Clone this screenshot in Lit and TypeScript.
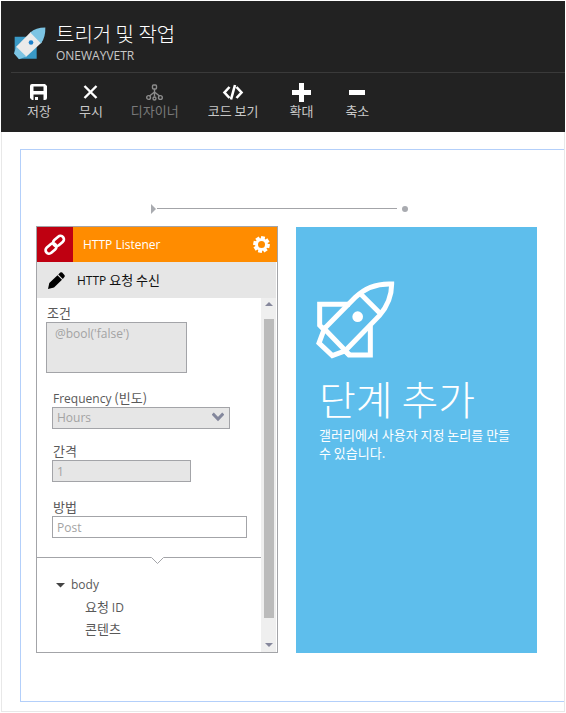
import { LitElement, html, css, svg } from "lit";
import { customElement } from "lit/decorators.js";

const icons = {
  save: svg`<path fill="#fff" fill-rule="evenodd" d="M2 0H15L17 2V14Q17 16 15 16H2L0 14V2Q0 0 2 0ZM3.500 2.500V7H13.500V2.500ZM3.500 10.500V16H5V13H8V16H13.500V10.500Z"/>`,
  discard: svg`<path fill="none" stroke="#fff" stroke-width="2.4" d="M2.5 2L14.500 14M14.500 2L2.500 14"/>`,
  designer: svg`<g fill="none" stroke="#8c8c8c" stroke-width="1.4"><rect x="6.500" y="1" width="4" height="4" rx="1"/><path d="M8.500 5V12.500M8.500 8L3.500 12M8.500 8L13.500 12"/><circle cx="2.600" cy="13.500" r="1.900"/><circle cx="8.500" cy="14.500" r="1.500"/><circle cx="14.400" cy="13.500" r="1.900"/></g>`,
};

@customElement("app-root")
export class AppRoot extends LitElement {
  static styles = css`
    :host {
      display: block;
      font: 13px/18px "Noto Sans CJK KR", "Noto Sans", sans-serif;
      color: #595959;
      background: #fff;
      padding: 1px;
    }
    * { box-sizing: border-box; }
    button, input, select, textarea { font: inherit; color: inherit; border-radius: 0; margin: 0; }
    button { background: none; border: 0; padding: 0; cursor: pointer; }
    svg { display: block; }
    h1, h2, h3, p, ul { margin: 0; padding: 0; font-weight: 400; }
    .latin { font-family: "Open Sans", "Noto Sans CJK KR", sans-serif; font-size: 12px; }
    span.latin { line-height: 12px; }

    .top { background: #222; color: #c8c8c8; padding: 20px 0 0 10px; height: 131px; }
    .brand { display: flex; align-items: flex-end; gap: 10px; padding: 0 0 7px 3px; border-bottom: 1px solid #3a3a3a; }
    .brand svg { margin-bottom: 5px; }
    .brand h1 { font-size: 20px; line-height: 26px; font-weight: 300; color: #fff; }
    .tools { display: flex; padding: 8px 0 0 2px; }
    .tool { display: flex; flex-direction: column; align-items: center; padding: 0 14px; }
    .tool.view { padding: 0 15px; }
    .tool.zoom { padding: 0 16px; }
    .tool svg { margin: 3px 0 1px; height: 17px; }
    .tool:disabled { color: #7a7a7a; }

    .page { border: 1px solid #e8e8e8; border-top: 0; padding: 17px 0 9px 18px; }
    .canvas { border: 1px solid #b3cffa; border-right: 0; padding: 54px 27px 48px 15px; }
    .connector { display: flex; align-items: center; height: 9px; margin: 0 129px 13px 115px; }
    .arrow { border: 5px solid transparent; border-left-color: #a9abb0; border-right: 0; margin-right: 1px; }
    .line { flex: 1; height: 1px; background: #a3a4a8; margin-right: 5px; }
    .dot { width: 6px; height: 6px; border-radius: 50%; background: #a9abb0; }
    .steps { display: grid; grid-template-columns: 1fr 1fr; gap: 18px; }

    .card { border: 1px solid #a3a4a8; }
    .head { display: flex; align-items: center; background: #ff8c00; color: #fff; height: 35px; padding-right: 7px; }
    .link { background: #bf0011; width: 36px; height: 35px; display: grid; place-items: center; margin-right: 10px; }
    .head h2 { flex: 1; }
    .sub h3 { font-size: 13px; }
    .sub { display: flex; align-items: center; gap: 12px; background: #e6e6e6; color: #111; height: 36px; padding-left: 11px; margin-right: 1px; }
    .body { display: flex; }
    .content { flex: 1; min-width: 0; }
    .form { display: flex; flex-direction: column; align-items: flex-start; padding: 6px 14px 19px 15px; border-bottom: 1px solid #a3a4a8; }
    .form label { padding-left: 1px; }
    .form .wide { margin-left: -6px; }
    .field { border: 1px solid #a3a4a8; height: 22px; line-height: 18px; padding: 0 4px; color: #a3a3a3; background: #fff; outline: 0; opacity: 1; }
    .field:disabled { background: #e6e6e6; }
    .cond { width: 141px; height: 51px; margin: 0 0 16px -6px; padding: 2px 8px; resize: none; display: block; }
    .picker { position: relative; width: 178px; margin-bottom: 13px; }
    .picker select { appearance: none; width: 100%; display: block; }
    .picker svg { position: absolute; right: 6px; top: 5px; pointer-events: none; }
    .short { width: 139px; margin-bottom: 16px; }
    .full { width: 195px; max-width: 100%; }
    .tree { position: relative; padding: 16px 0 12px 19px; line-height: 22px; }
    .notch { position: absolute; top: -1px; left: 51%; }
    .tree ul { list-style: none; padding-left: 29px; }
    .node { display: flex; align-items: center; gap: 6px; height: 22px; }
    .scroll { width: 15px; margin-right: 1px; background: #efefef; display: flex; flex-direction: column; align-items: center; padding: 4px 0 5px; }
    .up, .down { border: 4px solid transparent; }
    .up { border-top: 0; border-bottom-color: #86889c; margin-bottom: 13px; }
    .down { border-bottom: 0; border-top-color: #86889c; margin-top: 25px; }
    .thumb { flex: 1; width: 10px; background: #bbb; }

    .add { background: #5ebeec; color: #fff; text-align: left; margin-top: 1px; padding: 54px 16px 0 20px; display: flex; flex-direction: column; justify-content: flex-start; align-items: flex-start; }
    .title { font-size: 40px; line-height: 56px; font-weight: 300; margin: 11px 0 0 3px; }
    .text { margin-left: 3px; }
  `;

  render() {
    return html`
      <header class="top">
        <div class="brand">
          <svg width="32" height="33" viewBox="43 82 96 98">
            <path fill="#3999c6" d="M45 111H111V177H58L45 160Z" />
            <path fill="#eaeaea" d="M94 96L126 128L78 172L48 142Z" />
            <path fill="#7cc4e3" d="M137 83Q138 112 124 131L92 98Q108 83 137 83ZM50 141L43 161L58 178L80 170Z" />
            <circle cx="94" cy="128" r="7" fill="#1b80cc" />
          </svg>
          <div><h1>트리거 및 작업</h1><p class="latin">ONEWAYVETR</p></div>
        </div>
        <nav class="tools">
          <button class="tool"><svg width="17" viewBox="0 0 17 17">${icons.save}</svg>저장</button>
          <button class="tool"><svg width="17" viewBox="0 0 17 17">${icons.discard}</svg>무시</button>
          <button class="tool" disabled><svg width="17" viewBox="0 0 17 17">${icons.designer}</svg>디자이너</button>
          <button class="tool view"><svg width="22" viewBox="0 0 22 17"><path fill="none" stroke="#fff" stroke-width="2.600" d="M7.500 3L2.500 8.500L7.500 14M14.500 3L19.500 8.500L14.500 14M13 1L9 15.500" /></svg>코드 보기</button>
          <button class="tool zoom"><svg width="19" viewBox="0 0 19 17" overflow="visible"><path fill="#fff" d="M7 -1H12V6H19V11H12V18H7V11H0V6H7Z" /></svg>확대</button>
          <button class="tool zoom"><svg width="16" viewBox="0 0 16 17"><path fill="#fff" d="M0 6H16V11H0Z" /></svg>축소</button>
        </nav>
      </header>
      <main class="page">
        <div class="canvas">
          <div class="connector"><span class="arrow"></span><span class="line"></span><span class="dot"></span></div>
          <div class="steps">
            <section class="card">
              <div class="head">
                <span class="link">
                  <svg width="24" height="24" viewBox="0 0 24 24"><g fill="none" stroke="#fff" stroke-width="2.700"><rect x="-6" y="-3.500" width="12" height="7" rx="3.500" transform="translate(15.500 8) rotate(-40)" /><rect x="-6" y="-3.500" width="12" height="7" rx="3.500" transform="translate(8 15.500) rotate(-40)" /></g></svg>
                </span>
                <h2 class="latin">HTTP Listener</h2>
                <button aria-label="설정">
                  <svg width="17" height="17" viewBox="-8.500 -8.500 17 17"><g fill="#fff" transform="rotate(12)"><path d="M-2 -8.300H2V8.300H-2Z" /><path d="M-2 -8.300H2V8.300H-2Z" transform="rotate(45)" /><path d="M-2 -8.300H2V8.300H-2Z" transform="rotate(90)" /><path d="M-2 -8.300H2V8.300H-2Z" transform="rotate(135)" /><circle r="6.300" /></g><circle r="3.500" fill="#ff8c00" /></svg>
                </button>
              </div>
              <div class="sub">
                <svg width="17" height="17" viewBox="0 0 17 17"><path d="M0 17L1.300 11L9.500 3.200L14 7.700L6 15.500ZM10.300 2.400L12.200 .6Q13.200 -.2 14.200 .6L16.400 2.900Q17.200 3.900 16.400 5L14.800 6.900Z" /></svg>
                <h3><span class="latin">HTTP</span> 요청 수신</h3>
              </div>
              <div class="body">
                <div class="content">
                  <div class="form">
                    <label class="wide" for="cond">조건</label>
                    <textarea id="cond" class="field latin cond" disabled .value=${"@bool('false')"}></textarea>
                    <label for="freq"><span class="latin">Frequency</span> (빈도)</label>
                    <div class="picker">
                      <select id="freq" class="field latin" disabled><option>Hours</option></select>
                      <svg width="12" height="10" viewBox="0 0 12 10"><path fill="none" stroke="#83879c" stroke-width="3" d="M.7 1.500L6 7L11.300 1.500" /></svg>
                    </div>
                    <label for="interval">간격</label>
                    <input id="interval" class="field latin short" disabled value="1" />
                    <label for="method">방법</label>
                    <input id="method" class="field latin full" value="Post" />
                  </div>
                  <div class="tree">
                    <svg class="notch" width="13" height="8" viewBox="0 0 13 8"><path fill="#fff" d="M0 0H13L6.500 7Z" /><path fill="none" stroke="#a3a4a8" d="M.5 .5L6.500 6.500L12.500 .5" /></svg>
                    <div class="node"><svg width="9" height="5" viewBox="0 0 9 5"><path fill="#444" d="M0 0H9L4.500 4.500Z" /></svg><span class="latin">body</span></div>
                    <ul><li>요청 <span class="latin">ID</span></li><li>콘텐츠</li></ul>
                  </div>
                </div>
                <div class="scroll"><span class="up"></span><span class="thumb"></span><span class="down"></span></div>
              </div>
            </section>
            <button class="add">
              <svg width="79" height="78" viewBox="78 274 237 234">
                <g fill="none" stroke="#fff" stroke-width="15">
                  <path d="M102 418L196 323Q240 280 305 283Q305 335 268 378L165 484" />
                  <path d="M212 313L273 374M97 411L178 495" />
                  <path d="M180 344H89V407L102 420L87 460L127 498L165 484L177 496H241V408" />
                </g>
                <circle cx="203" cy="381" r="16" fill="#fff" />
              </svg>
              <span class="title">단계 추가</span>
              <span class="text">갤러리에서 사용자 지정 논리를 만들 수 있습니다.</span>
            </button>
          </div>
        </div>
      </main>
    `;
  }
}
